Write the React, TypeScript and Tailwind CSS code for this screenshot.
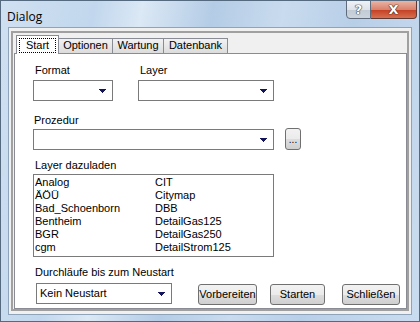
import React from 'react';

const Arrow: React.FC = () => (
  <svg width="7" height="4" viewBox="0 0 7 4" className="shrink-0">
    <rect x="0" y="0" width="7" height="1" fill="#14145a" />
    <rect x="1" y="1" width="5" height="1" fill="#14145a" />
    <rect x="2" y="2" width="3" height="1" fill="#14145a" />
    <rect x="3" y="3" width="1" height="1" fill="#14145a" />
  </svg>
);

const Combo: React.FC<{ className: string; text?: string }> = ({ className, text }) => (
  <div className={`flex items-center border border-[#7a7a7a] bg-white pl-[3px] pr-[6px] ${className}`}>
    <span className="flex-1 leading-[13px]">{text}</span>
    <Arrow />
  </div>
);

const Btn: React.FC<{ className: string; children: React.ReactNode }> = ({ className, children }) => (
  <div
    className={`flex items-center justify-center rounded-[3px] border border-[#707070] bg-[linear-gradient(#f2f2f2_0%,#ebebeb_50%,#dddddd_51%,#cfcfcf_100%)] leading-[13px] ${className}`}
  >
    {children}
  </div>
);

const layers = [
  ['Analog', 'CIT'],
  ['ÄÖÜ', 'Citymap'],
  ['Bad_Schoenborn', 'DBB'],
  ['Bentheim', 'DetailGas125'],
  ['BGR', 'DetailGas250'],
  ['cgm', 'DetailStrom125'],
];

export default function App() {
  return (
    <div className="w-[420px] h-[322px] overflow-hidden border border-[#55697f] bg-[linear-gradient(100deg,#cfe0f1_0%,#c2d7ed_20%,#dbe8f5_30%,#b4cce6_45%,#c9dbee_60%,#b8cfe8_75%,#cadcef_100%)] font-['Liberation_Sans',Arial,sans-serif] text-[11px] text-black flex flex-col">
      {/* Title bar */}
      <div className="h-[26px] flex shrink-0">
        <div className="pl-[6px] pt-[8px] text-[12px] font-['Open_Sans',sans-serif] leading-[16px]">Dialog</div>
        <div className="ml-auto mr-[2px] flex self-start -mt-px">
          <div className="w-[25px] h-[19px] rounded-bl-[4px] border border-[#5f6b7a] bg-[linear-gradient(#eef2f6_0%,#dde3ea_50%,#c2cad4_51%,#ccd4de_100%)] flex items-center justify-center text-white font-bold text-[13px] font-['DejaVu_Sans',sans-serif] [text-shadow:0_0_1px_#333,0_0_1px_#333,0_0_1px_#333]">
            ?
          </div>
          <div className="w-[46px] h-[19px] rounded-br-[4px] border border-l-0 border-[#5f3a34] bg-[linear-gradient(#eab4a6_0%,#d9826c_50%,#c33f24_51%,#d8704f_100%)] flex items-center justify-center text-white font-bold text-[13px] font-['DejaVu_Sans',sans-serif] [text-shadow:0_0_1px_#3a1a14,0_0_1px_#3a1a14,0_0_1px_#3a1a14]">
            X
          </div>
        </div>
      </div>

      {/* Client */}
      <div className="mx-[7px] h-[288px] bg-[#f0f0f0] border border-[#8fa3ba] px-[2px] pt-[3px]">
        <div className="h-[280px] border-2 border-[#a0a0a0] pt-[1px] pl-[1px] flex flex-col">
          {/* Tabs */}
          <div className="flex items-end pl-[2px] h-[19px] shrink-0">
            <div className="w-[43px] h-[19px] px-[2px] pt-[2px] bg-white border border-b-0 border-[#898c95] relative z-10 -mb-px">
              <div className="border border-dotted border-black leading-[13px] text-center">Start</div>
            </div>
            <div className="w-[55px] h-[15px] -ml-px text-center border border-b-0 border-[#898c95] bg-[linear-gradient(#f2f2f2,#dcdcdc)] leading-[13px]">
              Optionen
            </div>
            <div className="w-[52px] h-[15px] -ml-px text-center border border-b-0 border-[#898c95] bg-[linear-gradient(#f2f2f2,#dcdcdc)] leading-[13px]">
              Wartung
            </div>
            <div className="w-[65px] h-[15px] -ml-px text-center border border-b-0 border-[#898c95] bg-[linear-gradient(#f2f2f2,#dcdcdc)] leading-[13px]">
              Datenbank
            </div>
          </div>

          {/* Page */}
          <div className="flex-1 bg-white border border-[#898c95] pl-[18px] pt-[10px] flex flex-col">
            <div className="flex">
              <div className="w-[80px]">
                <div className="pl-[2px] leading-[13px] mb-[3px]">Format</div>
                <Combo className="w-[80px] h-[21px]" />
              </div>
              <div className="ml-[25px] w-[136px]">
                <div className="pl-[2px] leading-[13px] mb-[3px]">Layer</div>
                <Combo className="w-[136px] h-[21px]" />
              </div>
            </div>

            <div className="mt-[13px] pl-[1px] leading-[13px] mb-[2px]">Prozedur</div>
            <div className="flex items-start">
              <Combo className="w-[241px] h-[21px]" />
              <Btn className="ml-[11px] -mt-px w-[16px] h-[22px] items-end pb-[3px] text-[10px]">...</Btn>
            </div>

            <div className="mt-[9px] pl-[2px] leading-[13px] mb-[2px]">Layer dazuladen</div>
            <div className="w-[241px] h-[83px] border border-[#7a7a7a] pl-[1px] pt-[1px]">
              {layers.map(([a, b]) => (
                <div key={a} className="flex leading-[13px]">
                  <span className="w-[120px]">{a}</span>
                  <span>{b}</span>
                </div>
              ))}
            </div>

            <div className="mt-[9px] pl-[2px] leading-[13px] mb-[4px]">Durchläufe bis zum Neustart</div>
            <div className="flex items-start">
              <Combo className="ml-[3px] w-[136px] h-[21px]" text="Kein Neustart" />
              <Btn className="ml-[26px] mt-px w-[59px] h-[21px]">Vorbereiten</Btn>
              <Btn className="ml-[13px] mt-px w-[55px] h-[21px]">Starten</Btn>
              <Btn className="ml-[17px] mt-px w-[58px] h-[21px]">Schließen</Btn>
            </div>
          </div>
        </div>
      </div>
    </div>
  );
}
